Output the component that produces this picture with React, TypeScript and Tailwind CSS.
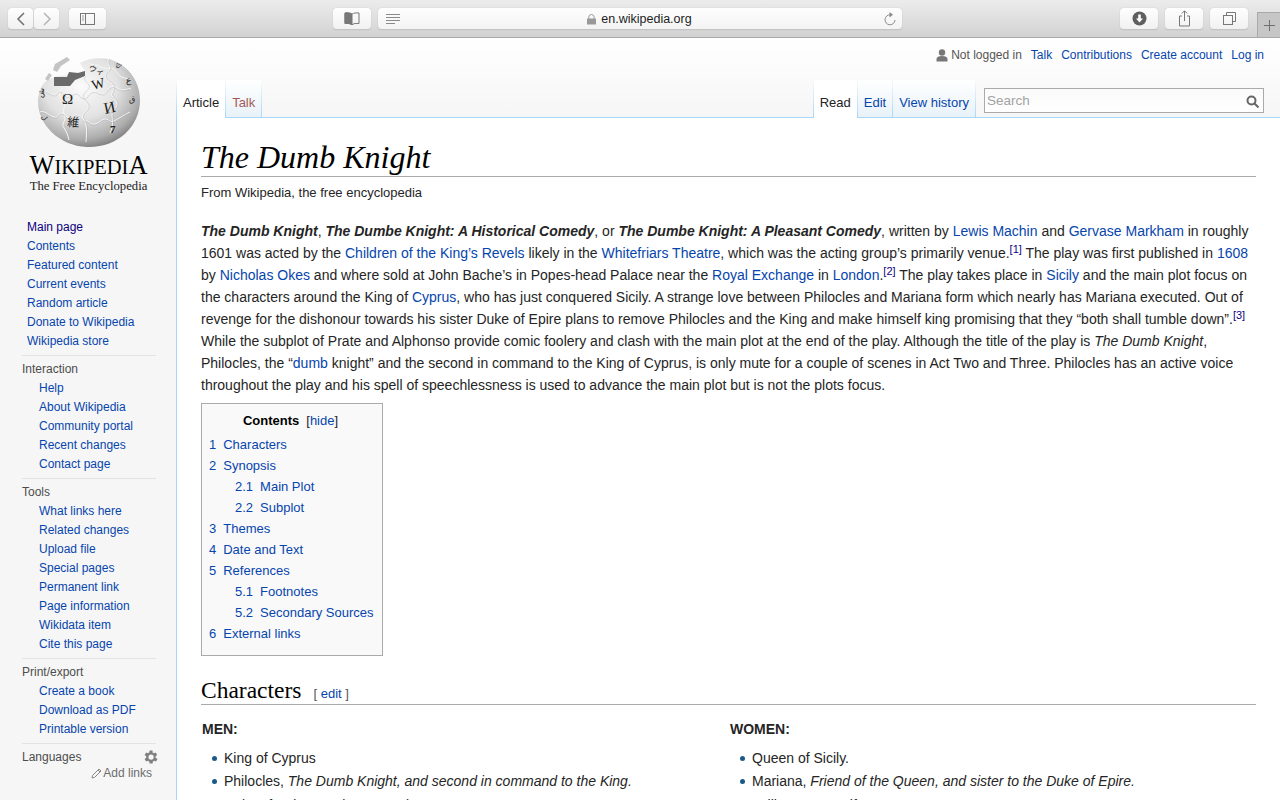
import { Fragment } from "react";

const sans = "font-['Liberation_Sans',Arial,sans-serif]";
const serif = "font-['Liberation_Serif','Times_New_Roman',serif]";

const sidebar = [
  {
    title: "",
    items: ["Main page", "Contents", "Featured content", "Current events", "Random article", "Donate to Wikipedia", "Wikipedia store"],
  },
  { title: "Interaction", items: ["Help", "About Wikipedia", "Community portal", "Recent changes", "Contact page"] },
  {
    title: "Tools",
    items: ["What links here", "Related changes", "Upload file", "Special pages", "Permanent link", "Page information", "Wikidata item", "Cite this page"],
  },
  { title: "Print/export", items: ["Create a book", "Download as PDF", "Printable version"] },
];

const toc = [
  { n: "1", t: "Characters" },
  { n: "2", t: "Synopsis" },
  { n: "2.1", t: "Main Plot", sub: true },
  { n: "2.2", t: "Subplot", sub: true },
  { n: "3", t: "Themes" },
  { n: "4", t: "Date and Text" },
  { n: "5", t: "References" },
  { n: "5.1", t: "Footnotes", sub: true },
  { n: "5.2", t: "Secondary Sources", sub: true },
  { n: "6", t: "External links" },
];

function A({ children }: { children: React.ReactNode }) {
  return <a className="text-[#0645ad]">{children}</a>;
}

function Sup({ n }: { n: number }) {
  return <sup className="text-[11px] leading-none text-[#0b0080]">[{n}]</sup>;
}

function ToolButton({ w, children }: { w: string; children: React.ReactNode }) {
  return (
    <div className={`${w} flex h-[22px] items-center justify-center rounded-[4px] border-b border-[#c4c4c4] bg-gradient-to-b from-[#fefefe] to-[#f1f1f1] shadow-[0_0_1px_rgba(0,0,0,0.25)]`}>
      {children}
    </div>
  );
}

function Toolbar() {
  return (
    <div className="relative flex h-[38px] shrink-0 items-start border-b border-[#a9a9a9] bg-gradient-to-b from-[#ececec] to-[#d2d2d2] pt-2">
      <div className="ml-2 flex gap-px">
        <ToolButton w="w-[25px]">
          <svg width="10" height="14" viewBox="0 0 10 14" fill="none" stroke="#6f6f6f" strokeWidth="1.5"><path d="M8 1 2 7l6 6" /></svg>
        </ToolButton>
        <ToolButton w="w-[25px]">
          <svg width="10" height="14" viewBox="0 0 10 14" fill="none" stroke="#b5b5b5" strokeWidth="1.5"><path d="m2 1 6 6-6 6" /></svg>
        </ToolButton>
      </div>
      <div className="ml-[10px]">
        <ToolButton w="w-[37px]">
          <svg width="15" height="12" viewBox="0 0 15 12" fill="none" stroke="#777"><rect x=".5" y=".5" width="14" height="11" /><path d="M5.500 .5v11" /><path d="M2 3h2M2 5h2M2 7h2" strokeWidth=".7" /></svg>
        </ToolButton>
      </div>
      <div className="ml-[227px]">
        <ToolButton w="w-[38px]">
          <svg width="16" height="14" viewBox="0 0 16 14" fill="none" stroke="#777"><path d="M8 2.200C6.500 1 4 .7 1 1v10.500c3-.3 5.500 0 7 1.300 1.500-1.300 4-1.600 7-1.300V1c-3-.3-5.500 0-7 1.200Z" /><path d="M1 1c3-.3 5.500 0 7 1.200v10.600c-1.500-1.300-4-1.600-7-1.300Z" fill="#777" /></svg>
        </ToolButton>
      </div>
      <div className={`${sans} ml-[7px] flex h-[22px] w-[524px] items-center rounded-[4px] border-b border-[#c4c4c4] bg-gradient-to-b from-[#fefefe] to-[#f3f3f3] shadow-[0_0_1px_rgba(0,0,0,0.25)]`}>
        <svg className="ml-2 shrink-0" width="15" height="10" viewBox="0 0 15 10" stroke="#8a8a8a"><path d="M0 .5h14M0 3.500h14M0 6.500h14M0 9.500h9" /></svg>
        <div className="flex flex-1 items-center justify-center gap-[5px] pt-px pr-[6px] text-[12.500px] text-[#1d1d1d]">
          <svg width="9" height="11" viewBox="0 0 9 11"><path d="M1.800 5V3.200a2.700 2.700 0 0 1 5.400 0V5" fill="none" stroke="#999" /><rect y="4.500" width="9" height="6" rx=".5" fill="#999" /></svg>
          en.wikipedia.org
        </div>
        <svg className="mr-[6px] shrink-0" width="12" height="14" viewBox="0 0 12 14" fill="none" stroke="#8a8a8a"><path d="M6.500 2.800A5 5 0 1 0 11 8" /><path d="m5.500 0 3.500 2.800-3.500 2.700Z" fill="#8a8a8a" stroke="none" /></svg>
      </div>
      <div className="ml-[218px] flex gap-[7px]">
        <ToolButton w="w-[38px]">
          <svg width="15" height="15" viewBox="0 0 15 15"><circle cx="7.500" cy="7.500" r="7" fill="#5f5f5f" /><path d="M6.200 3.500h2.600v4h2.200L7.500 11.500 4 7.500h2.200Z" fill="#fff" /></svg>
        </ToolButton>
        <ToolButton w="w-[38px]">
          <svg width="13" height="17" viewBox="0 0 13 17" fill="none" stroke="#777"><path d="M4 6H1.500v10h10V6H9" /><path d="M6.500 11V1M3.800 3.500 6.500 .8l2.700 2.700" /></svg>
        </ToolButton>
        <ToolButton w="w-[38px]">
          <svg width="13" height="13" viewBox="0 0 13 13" fill="none" stroke="#777"><rect x=".5" y="3.500" width="9" height="9" /><path d="M3.500 3.500v-3h9v9h-3" /></svg>
        </ToolButton>
      </div>
      <div className="absolute right-0 bottom-0 flex h-[25px] w-[23px] items-center justify-center border-t border-l border-[#a9a9a9] bg-[#c6c6c6]">
        <svg width="11" height="11" viewBox="0 0 11 11" stroke="#6f6f6f"><path d="M5.500 0v11M0 5.500h11" /></svg>
      </div>
    </div>
  );
}

function Logo() {
  const glyphs = [
    { x: 25, y: 52, s: 15, r: 0, t: "Ω", w: "normal" },
    { x: 56, y: 38, s: 14, r: -15, t: "W", w: "normal" },
    { x: 68, y: 62, s: 16, r: -12, t: "И", w: "normal" },
    { x: 30, y: 74, s: 12, r: 5, t: "維", w: "normal" },
    { x: 73, y: 81, s: 11, r: 0, t: "7", w: "bold" },
    { x: 51, y: 18, s: 8, r: 22, t: "ウィ", w: "normal" },
    { x: 78, y: 15, s: 8, r: 20, t: "ש", w: "normal" },
    { x: 89, y: 31, s: 9, r: 0, t: "ع", w: "normal" },
    { x: 92, y: 50, s: 8, r: 0, t: "ق", w: "normal" },
    { x: 5, y: 46, s: 8, r: -75, t: "ش", w: "normal" },
    { x: 4, y: 65, s: 7, r: 50, t: "ل", w: "normal" },
  ];
  return (
    <svg width="104" height="96" viewBox="0 0 104 96" className="block">
      <defs>
        <radialGradient id="globe" cx="42%" cy="32%" r="72%">
          <stop offset="0%" stopColor="#fbfbfb" />
          <stop offset="50%" stopColor="#e2e2e2" />
          <stop offset="82%" stopColor="#adadad" />
          <stop offset="100%" stopColor="#787878" />
        </radialGradient>
      </defs>
      <path d="M43 11C50 7 60 5 72 7c20 6 31 23 31 41 0 27-23 48-53 47C22 94 1 72 1 50c0-8 3-16 7-20l9-5 31-6Z" fill="url(#globe)" />
      <path d="M17 25h13l2-5 9 1 7-2v5l-10 4-5 6H17Z" fill="#6a6a6a" />
      <path d="M8 27l4-6 3 2-4 6ZM18 12l12-7 3 3-9 6-4 6-4-2Z" fill="#c4c4c4" />
      <g fill="none" stroke="#f7f7f7" strokeWidth="1">
        <path d="M3 38c7 0 11 5 15 5 3 0 2-4 5-4s3 3 6 5c5 3 6-3 10-3s4 5 8 5 4-4 8-6 7 2 11 2 4-5 8-7 7 3 11 3 6-2 9-1" />
        <path d="M48 24c-4 3 1 6 3 9s-3 6-5 9 0 5 3 8 3 6 0 9-5 5-2 9 3 12 2 22" />
        <path d="M72 7c-3 3 1 6 1 9s-5 4-5 8 5 5 7 8 2 6 0 9 4 6 5 10-5 8-5 12 2 10-2 18" />
        <path d="M3 60c5-2 9 4 14 5s4-4 8-4 3 5 7 5 5-4 9-3 4 6 8 6 4 4 9 3 6-5 10-5 5 4 9 2 10-6 16-9" />
        <path d="M25 36c-2 4-4 6-1 10s5 6 3 10 1 6 1 10-4 6-1 10 4 8 5 12" />
        <path d="M52 11c4 3 7 1 10 3s6 3 10 2 6 2 9 6 7 4 12 5" />
      </g>
      <g fill="none" stroke="#9e9e9e" strokeWidth=".4" opacity=".8">
        <path d="M3 39c7 0 11 5 15 5 3 0 2-4 5-4s3 3 6 5c5 3 6-3 10-3s4 5 8 5 4-4 8-6 7 2 11 2 4-5 8-7 7 3 11 3 6-2 9-1" />
        <path d="M49 24c-4 3 1 6 3 9s-3 6-5 9 0 5 3 8 3 6 0 9-5 5-2 9 3 12 2 22" />
        <path d="M73 7c-3 3 1 6 1 9s-5 4-5 8 5 5 7 8 2 6 0 9 4 6 5 10-5 8-5 12 2 10-2 18" />
        <path d="M3 61c5-2 9 4 14 5s4-4 8-4 3 5 7 5 5-4 9-3 4 6 8 6 4 4 9 3 6-5 10-5 5 4 9 2 10-6 16-9" />
      </g>
      <g fill="#222" className="font-['Liberation_Serif','Noto_Sans_CJK_JP',serif]">
        {glyphs.map((g) => (
          <text key={g.t} x={g.x} y={g.y} fontSize={g.s} fontWeight={g.w} transform={`rotate(${g.r} ${g.x} ${g.y})`}>{g.t}</text>
        ))}
      </g>
    </svg>
  );
}

function Sidebar() {
  return (
    <div className="flex h-full w-[176px] shrink-0 flex-col bg-[#f6f6f6] bg-gradient-to-b from-white to-[#f6f6f6] bg-[length:100%_80px] bg-no-repeat">
      <div className="flex h-[180px] flex-col items-center pt-[14px] pl-[1px]">
        <Logo />
        <div className={`${serif} mt-[8px] text-[26.500px] leading-[18px] text-black`}>
          W<span className="text-[20.500px]">IKIPEDI</span>A
        </div>
        <div className={`${serif} mt-[3px] text-[12.700px] leading-[14px] text-[#222]`}>The Free Encyclopedia</div>
      </div>
      <div className={`${sans} text-[12px] leading-[19px]`}>
        {sidebar.map((s) => (
          <Fragment key={s.title || "main"}>
            {s.title ? (
              <div className="mt-1 mr-5 ml-[22px] border-t border-[#e3e3e3] pt-1">
                <div className="text-[#4d4d4d]">{s.title}</div>
              </div>
            ) : null}
            {s.items.map((item) => (
              <div key={item} className={s.title ? "ml-[39px] text-[#0645ad]" : `ml-[27px] ${item === "Main page" ? "text-[#0b0080]" : "text-[#0645ad]"}`}>
                {item}
              </div>
            ))}
          </Fragment>
        ))}
        <div className="mt-1 mr-5 ml-[22px] border-t border-[#e3e3e3] pt-1">
          <div className="relative text-[#4d4d4d]">
            Languages
            <svg className="absolute top-0 left-[120px]" width="18" height="18" viewBox="0 0 24 24" fill="#808080"><path d="M19.400 13a7.500 7.500 0 0 0 0-2l2.100-1.600-2-3.500-2.500 1a7.500 7.500 0 0 0-1.700-1L15.400 3.300h-4l-.4 2.600a7.500 7.500 0 0 0-1.700 1l-2.500-1-2 3.500L6.900 11a7.500 7.500 0 0 0 0 2l-2.100 1.600 2 3.500 2.500-1a7.500 7.500 0 0 0 1.700 1l.4 2.600h4l.4-2.600a7.500 7.500 0 0 0 1.700-1l2.500 1 2-3.500ZM13.400 15.500a3.500 3.500 0 1 1 0-7 3.500 3.500 0 0 1 0 7Z" transform="translate(-1.300)" /></svg>
          </div>
          <div className="-mt-px flex items-center justify-end gap-px pr-[4px] leading-[14px] text-[#6d6d6d]">
            <svg width="11" height="11" viewBox="0 0 11 11" fill="none" stroke="#888"><path d="M1 10l.6-2.600L8 1l2 2-6.400 6.400Z" /><path d="m7 2 2 2" /></svg>
            Add links
          </div>
        </div>
      </div>
    </div>
  );
}

function Divider() {
  return <div className="w-px shrink-0 bg-gradient-to-b from-transparent to-[#a7d7f9]" />;
}

function Tab({ label, active, color }: { label: string; active?: boolean; color: string }) {
  return (
    <div
      className={`flex h-[38px] items-start px-[6px] pt-[15px] text-[13px] leading-[16px] ${color} ${
        active ? "bg-white" : "border-b border-[#a7d7f9] bg-gradient-to-b from-white to-[#e8f2f8]"
      }`}
    >
      {label}
    </div>
  );
}

function TopArea() {
  return (
    <>
      <div className={`${sans} flex h-[42px] items-start justify-end gap-[9px] pt-[10px] pr-[16px] text-[12px] leading-[15px] text-[#0645ad]`}>
        <span className="flex items-center gap-[3px] text-[#555]">
          <svg width="12" height="13" viewBox="0 0 12 13" fill="#777"><circle cx="6" cy="3.500" r="3.200" /><path d="M.5 12.500V10c0-2 2-3 5.500-3s5.500 1 5.500 3v2.500Z" /></svg>
          Not logged in
        </span>
        <span>Talk</span>
        <span>Contributions</span>
        <span>Create account</span>
        <span>Log in</span>
      </div>
      <div className={`${sans} flex h-[38px]`}>
        <div className="flex">
          <Divider />
          <Tab label="Article" active color="text-[#222]" />
          <Divider />
          <Tab label="Talk" color="text-[#a55858]" />
          <Divider />
        </div>
        <div className="flex-1 border-b border-[#a7d7f9]" />
        <div className="flex">
          <Divider />
          <Tab label="Read" active color="text-[#222]" />
          <Divider />
          <Tab label="Edit" color="text-[#0645ad]" />
          <Divider />
          <Tab label="View history" color="text-[#0645ad]" />
          <Divider />
        </div>
        <div className="w-[304px] border-b border-[#a7d7f9] pt-[8px] pr-[16px] pl-[8px]">
          <div className="flex h-[25px] items-center justify-between border border-[#aaa] bg-gradient-to-b from-[#fafafa] to-white pt-px pr-1 pl-[2px] text-[13.500px] text-[#a2a2a2]">
            Search
            <svg width="13" height="13" viewBox="0 0 13 13" fill="none" stroke="#666" strokeWidth="2"><circle cx="5.500" cy="5.500" r="4" /><path d="m8.500 8.500 4 4" /></svg>
          </div>
        </div>
      </div>
    </>
  );
}

function Article() {
  return (
    <div className={`${sans} flex-1 overflow-hidden border-l border-[#a7d7f9] bg-white pt-[21px] pr-[24px] pl-[24px] text-[14px] leading-[22px] text-[#252525]`}>
      <h1 className={`${serif} border-b border-[#aaa] pb-[1px] text-[32px] leading-[36px] text-black italic`}>The Dumb Knight</h1>
      <div className="mt-[6px] text-[13px] leading-[20px] text-[#252525]">From Wikipedia, the free encyclopedia</div>
      <p className="mt-[17px]">
        <b><i>The Dumb Knight</i></b>, <b><i>The Dumbe Knight: A Historical Comedy</i></b>, or <b><i>The Dumbe Knight: A Pleasant Comedy</i></b>, written by <A>Lewis Machin</A> and <A>Gervase Markham</A> in roughly 1601 was acted by the <A>Children of the King’s Revels</A> likely in the <A>Whitefriars Theatre</A>, which was the acting group’s primarily venue.<Sup n={1} /> The play was first published in <A>1608</A> by <A>Nicholas Okes</A> and where sold at John Bache’s in Popes-head Palace near the <A>Royal Exchange</A> in <A>London</A>.<Sup n={2} /> The play takes place in <A>Sicily</A> and the main plot focus on the characters around the King of <A>Cyprus</A>, who has just conquered Sicily. A strange love between Philocles and Mariana form which nearly has Mariana executed. Out of revenge for the dishonour towards his sister Duke of Epire plans to remove Philocles and the King and make himself king promising that they “both shall tumble down”.<Sup n={3} /> While the subplot of Prate and Alphonso provide comic foolery and clash with the main plot at the end of the play. Although the title of the play is <i>The Dumb Knight</i>, Philocles, the “<A>dumb</A> knight” and the second in command to the King of Cyprus, is only mute for a couple of scenes in Act Two and Three. Philocles has an active voice throughout the play and his spell of speechlessness is used to advance the main plot but is not the plots focus.
      </p>
      <div className="mt-[7px] w-[182px] border border-[#aaa] bg-[#f9f9f9] px-[7px] pt-[7px] pb-[11px] text-[13px]">
        <div className="pr-[3px] text-center leading-[20px] text-black">
          <b>Contents</b><span className="ml-[7px] text-[#252525]">[<A>hide</A>]</span>
        </div>
        <div className="mt-[3px]">
          {toc.map((e) => (
            <div key={e.t} className={`flex h-[21px] leading-[21px] whitespace-nowrap text-[#0645ad] ${e.sub ? "ml-[26px]" : ""}`}>
              <span className="mr-[7px]">{e.n}</span>
              <span>{e.t}</span>
            </div>
          ))}
        </div>
      </div>
      <h2 className={`${serif} mt-[22px] flex h-[27px] items-baseline border-b border-[#aaa] text-[23.500px] leading-[24px] text-black`}>
        Characters
        <span className={`${sans} ml-[12px] text-[13px] text-[#555]`}>[ <A>edit</A> ]</span>
      </h2>
      <div className="grid grid-cols-[528px_1fr] pt-[13px] pl-px">
        <Column title="MEN:" rows={[<>King of Cyprus</>, <>Philocles, <i>The Dumb Knight, and second in command to the King.</i></>, <>Duke of Epire, Brother to Mariana.</>]} />
        <Column title="WOMEN:" rows={[<>Queen of Sicily.</>, <>Mariana, <i>Friend of the Queen, and sister to the Duke of Epire.</i></>, <>Lollia, Prate’s wife.</>]} />
      </div>
    </div>
  );
}

function Column({ title, rows }: { title: string; rows: React.ReactNode[] }) {
  return (
    <div>
      <div className="leading-[22px] font-bold">{title}</div>
      <ul className="mt-[7px]">
        {rows.map((r, i) => (
          <li key={i} className="mb-px flex h-[22px] items-center pl-[10px] last:mt-[2px]">
            <span className="mr-[7px] h-[5px] w-[5px] shrink-0 rounded-full bg-[#1a5a8a]" />
            <span>{r}</span>
          </li>
        ))}
      </ul>
    </div>
  );
}

export default function App() {
  return (
    <div className={`${sans} flex h-[800px] w-[1280px] flex-col overflow-hidden bg-white`}>
      <Toolbar />
      <div className="flex min-h-0 flex-1">
        <Sidebar />
        <div className="flex min-w-0 flex-1 flex-col bg-gradient-to-b from-white to-[#f6f6f6] bg-[length:100%_80px] bg-no-repeat">
          <TopArea />
          <Article />
        </div>
      </div>
    </div>
  );
}
